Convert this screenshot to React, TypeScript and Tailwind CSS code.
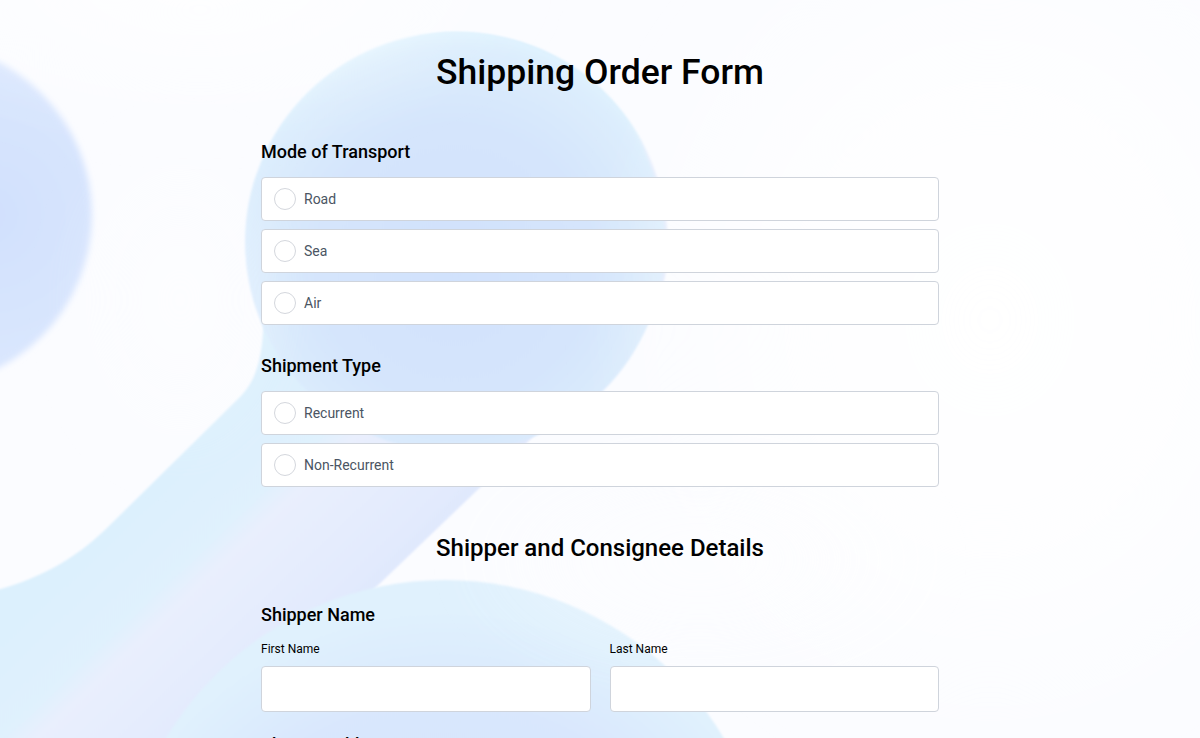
import React, { useState } from "react";

const modes = ["Road", "Sea", "Air"];
const shipmentTypes = ["Recurrent", "Non-Recurrent"];

function Backdrop() {
  return (
    <svg className="pointer-events-none absolute left-0 top-0 h-[738px] w-full" viewBox="0 0 1200 738" preserveAspectRatio="none">
      <defs>
        <radialGradient id="leftBlob" cx="70%" cy="50%" r="60%">
          <stop offset="0" stopColor="#d1e0fd" />
          <stop offset="1" stopColor="#dde9fe" />
        </radialGradient>
        <linearGradient id="band" gradientUnits="userSpaceOnUse" x1="240" y1="397" x2="447" y2="615">
          <stop offset="0" stopColor="#dcf0fd" />
          <stop offset="0.28" stopColor="#e0f1fd" />
          <stop offset="0.36" stopColor="#e9effd" />
          <stop offset="0.7" stopColor="#e2eafd" />
          <stop offset="1" stopColor="#d8e4fc" />
        </linearGradient>
        <radialGradient id="topBlob" cx="50%" cy="55%" r="55%">
          <stop offset="0" stopColor="#d1e1fc" />
          <stop offset="0.6" stopColor="#d5e5fc" />
          <stop offset="0.92" stopColor="#dcedfd" />
          <stop offset="1" stopColor="#e0f3fe" />
        </radialGradient>
        <radialGradient id="bottomBlob" cx="50%" cy="60%" r="55%">
          <stop offset="0" stopColor="#d3e2fc" />
          <stop offset="0.75" stopColor="#d9e7fd" />
          <stop offset="1" stopColor="#e0f1fd" />
        </radialGradient>
        <radialGradient id="hazeRight" cx="50%" cy="50%" r="50%">
          <stop offset="0" stopColor="#ffffff" stopOpacity="0.95" />
          <stop offset="0.5" stopColor="#ffffff" stopOpacity="0.7" />
          <stop offset="1" stopColor="#ffffff" stopOpacity="0" />
        </radialGradient>
        <radialGradient id="hazeSoft" cx="50%" cy="50%" r="50%">
          <stop offset="0" stopColor="#ffffff" stopOpacity="0.85" />
          <stop offset="1" stopColor="#ffffff" stopOpacity="0" />
        </radialGradient>
        <filter id="soft" x="-20%" y="-20%" width="140%" height="140%">
          <feGaussianBlur stdDeviation="1.2" />
        </filter>
        <filter id="softer" x="-20%" y="-20%" width="140%" height="140%">
          <feGaussianBlur stdDeviation="3" />
        </filter>
        <filter id="haze" x="-20%" y="-20%" width="140%" height="140%">
          <feGaussianBlur stdDeviation="30" />
        </filter>
      </defs>

      <rect width="1200" height="738" fill="#fbfcff" />
      <circle cx="-80" cy="215" r="172" fill="url(#leftBlob)" filter="url(#softer)" />
      <path
        d="M455 32 C580 32 668 130 668 245 C668 330 610 370 540 430 L300 660 C250 710 230 760 230 800 L-60 800 L-60 600 C20 592 70 565 110 525 L240 397 C258 378 264 355 264 300 C264 150 350 32 455 32 Z"
        fill="url(#band)"
        filter="url(#soft)"
      />
      <circle cx="455" cy="242" r="210" fill="url(#topBlob)" filter="url(#soft)" />
      <circle cx="445" cy="905" r="325" fill="url(#bottomBlob)" filter="url(#soft)" />

      <ellipse cx="990" cy="320" rx="380" ry="440" fill="url(#hazeRight)" filter="url(#haze)" />
      <ellipse cx="200" cy="-20" rx="330" ry="140" fill="url(#hazeSoft)" filter="url(#haze)" />
      <ellipse cx="180" cy="300" rx="110" ry="170" fill="url(#hazeSoft)" opacity="0.5" filter="url(#haze)" />
      <ellipse cx="700" cy="560" rx="240" ry="110" fill="url(#hazeSoft)" opacity="0.55" filter="url(#haze)" />
    </svg>
  );
}

function RadioRow(props: { label: string; name: string; checked: boolean; onPick: () => void }) {
  return (
    <label className="flex h-[44px] cursor-pointer items-center gap-2 rounded-[4px] border border-[#cfd4dc] bg-white px-[12px]">
      <input type="radio" name={props.name} checked={props.checked} onChange={props.onPick} className="sr-only" />
      <span className="flex h-[22px] w-[22px] items-center justify-center rounded-full border border-[#d4d7dd] bg-white">
        {props.checked && <span className="h-[10px] w-[10px] rounded-full bg-[#2563eb]" />}
      </span>
      <span className="text-[14px] text-[#4b5563]">{props.label}</span>
    </label>
  );
}

export default function App() {
  const [mode, setMode] = useState("");
  const [shipment, setShipment] = useState("");

  return (
    <div className="relative min-h-screen overflow-hidden bg-white font-['Roboto',sans-serif] text-black">
      <Backdrop />

      <div className="relative mx-auto w-[678px] pt-[52px]">
        <h1 className="text-center text-[35.5px] leading-[40px] font-medium">Shipping Order Form</h1>

        <div className="mt-[46px]">
          <h3 className="text-[18px] leading-[28px] font-medium">Mode of Transport</h3>
          <div className="mt-[11px] flex flex-col gap-2">
            {modes.map((m) => (
              <RadioRow key={m} label={m} name="mode" checked={mode === m} onPick={() => setMode(m)} />
            ))}
          </div>
        </div>

        <div className="mt-[27px]">
          <h3 className="text-[18px] leading-[28px] font-medium">Shipment Type</h3>
          <div className="mt-[11px] flex flex-col gap-2">
            {shipmentTypes.map((t) => (
              <RadioRow key={t} label={t} name="shipment" checked={shipment === t} onPick={() => setShipment(t)} />
            ))}
          </div>
        </div>

        <h2 className="mt-[45px] text-center text-[24px] leading-[32px] font-medium">Shipper and Consignee Details</h2>

        <div className="mt-[37px]">
          <h3 className="text-[18px] leading-[28px] font-medium">Shipper Name</h3>
          <div className="mt-[12px] grid grid-cols-2 gap-[19px]">
            <div>
              <label className="block text-[12px] leading-[16px]">First Name</label>
              <input type="text" className="mt-[9px] h-[46px] w-full rounded-[4px] border border-[#cfd4dc] bg-white px-3 text-[14px] outline-none focus:border-blue-500" />
            </div>
            <div>
              <label className="block text-[12px] leading-[16px]">Last Name</label>
              <input type="text" className="mt-[9px] h-[46px] w-full rounded-[4px] border border-[#cfd4dc] bg-white px-3 text-[14px] outline-none focus:border-blue-500" />
            </div>
          </div>
        </div>

        <div className="mt-[19px] pb-10">
          <h3 className="text-[18px] leading-[28px] font-medium">Shipper Address</h3>
        </div>
      </div>
    </div>
  );
}
